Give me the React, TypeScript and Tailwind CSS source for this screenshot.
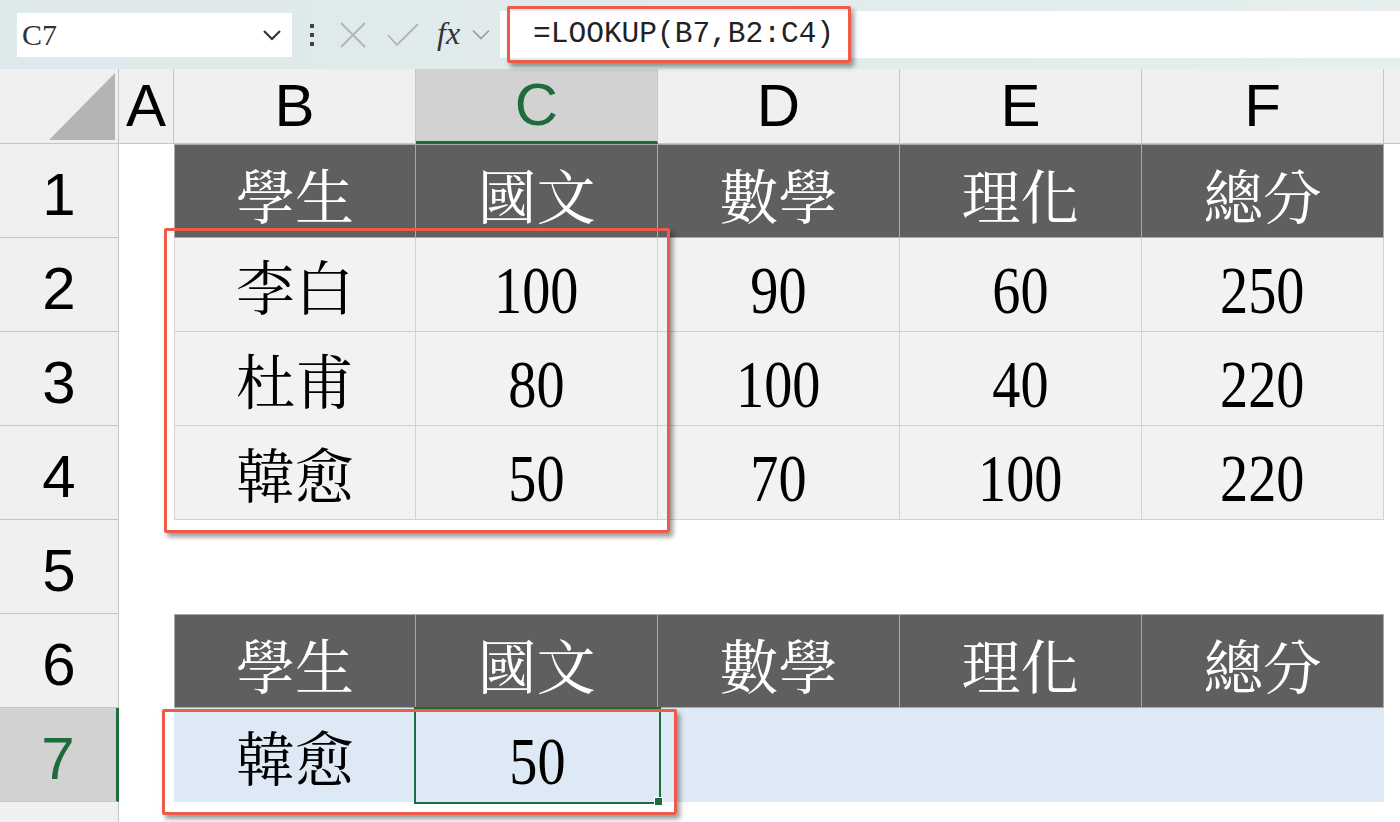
const serif = "font-['Liberation_Serif','Noto_Serif_CJK_TC','Noto_Sans_CJK_TC',serif]";
const sans = "font-['Liberation_Sans','Noto_Sans',sans-serif]";

const cols = ['A', 'B', 'C', 'D', 'E', 'F'];
const heads = ['學生', '國文', '數學', '理化', '總分'];
const rows: (string | number)[][] = [
  ['李白', 100, 90, 60, 250],
  ['杜甫', 80, 100, 40, 220],
  ['韓愈', 50, 70, 100, 220],
];

function CellText({ value }: { value: string | number }) {
  if (typeof value === 'number') {
    return <span className="inline-block scale-x-[0.84] text-[67px] leading-none">{value}</span>;
  }
  return <span className="text-[59px] leading-none">{value}</span>;
}

function HeadRow() {
  return (
    <>
      <div className="bg-white" />
      {heads.map((h, i) => (
        <div
          key={h}
          className={`flex items-center justify-center border-t border-r border-b border-[#a9a9a9] bg-[#5f5f5f] pt-4 text-white ${serif} ${i === 0 ? 'border-l' : ''}`}
        >
          <span className="text-[59px] leading-none">{h}</span>
        </div>
      ))}
      <div className="bg-white" />
    </>
  );
}

function DataRow({ data, blue }: { data: (string | number | null)[]; blue?: boolean }) {
  return (
    <>
      <div className="bg-white" />
      {data.map((v, i) => (
        <div
          key={i}
          className={`flex items-center justify-center pt-3 text-black ${serif} ${
            blue ? 'bg-[#dde9f5]' : `border-r border-b border-[#d3d3d3] bg-[#f2f2f2] ${i === 0 ? 'border-l' : ''}`
          }`}
        >
          {v !== null && <CellText value={v} />}
        </div>
      ))}
      <div className="bg-white" />
    </>
  );
}

function EmptyRow() {
  return (
    <>
      {Array.from({ length: 7 }).map((_, i) => (
        <div key={i} className="bg-white" />
      ))}
    </>
  );
}

function RowHead({ n, active }: { n: number | string; active?: boolean }) {
  return (
    <div
      className={`flex items-center justify-center border-b border-r pt-2 ${sans} text-[60px] leading-none ${
        active
          ? 'border-b-[#c6c6c6] border-r-[3px] border-r-[#1e6b3c] bg-[#d2d2d2] text-[#1e6b3c]'
          : 'border-[#c6c6c6] bg-[#f0f0f0] text-black'
      }`}
    >
      {n}
    </div>
  );
}

function RedBox({ className }: { className: string }) {
  return (
    <div
      className={`pointer-events-none absolute rounded-[2px] border-[3px] border-[#ef5b4b] shadow-[3px_4px_5px_rgba(0,0,0,0.4)] ${className}`}
    />
  );
}

function FormulaBar() {
  return (
    <div className="flex h-[69px] items-center bg-gradient-to-r from-[#dde9ea] to-[#e6eeee]">
      <div className="ml-[17px] flex h-[44px] w-[275px] items-center justify-between bg-white pl-[5px] pr-[10px]">
        <span className={`text-[30px] text-[#333] ${serif}`}>C7</span>
        <svg width="20" height="12" viewBox="0 0 20 12" fill="none" stroke="#333" strokeWidth="2.2">
          <path d="M2 2l8 8 8-8" />
        </svg>
      </div>
      <div className="ml-[18px] flex flex-col gap-[5px]">
        <span className="h-[4px] w-[4px] bg-[#444]" />
        <span className="h-[4px] w-[4px] bg-[#444]" />
        <span className="h-[4px] w-[4px] bg-[#444]" />
      </div>
      <svg className="ml-[26px]" width="26" height="26" viewBox="0 0 26 26" fill="none" stroke="#b3b3b3" strokeWidth="1.8">
        <path d="M1 1l24 24M25 1L1 25" />
      </svg>
      <svg className="ml-[21px]" width="32" height="24" viewBox="0 0 32 24" fill="none" stroke="#b3b3b3" strokeWidth="1.8">
        <path d="M1 12l9 10L31 1" />
      </svg>
      <span className={`ml-[18px] -mt-[4px] text-[32px] italic text-[#333] ${serif}`}>fx</span>
      <svg className="ml-[12px]" width="18" height="11" viewBox="0 0 18 11" fill="none" stroke="#999" strokeWidth="1.6">
        <path d="M1 1.5l8 8 8-8" />
      </svg>
      <div className="ml-[10px] flex h-[47px] flex-1 items-center bg-white pl-[33px]">
        <span className="font-['Liberation_Mono',monospace] text-[29.5px] text-[#222]">=LOOKUP(B7,B2:C4)</span>
      </div>
    </div>
  );
}

export default function App() {
  return (
    <div className="relative h-[822px] w-[1400px] overflow-hidden bg-white">
      <FormulaBar />
      <div className="grid h-[753px] grid-cols-[119px_55px_242px_242px_242px_242px_242px_1fr] grid-rows-[75px_repeat(7,94px)_1fr]">
        {/* column headers */}
        <div className="flex items-end justify-end border-r border-b border-[#c6c6c6] bg-[#f0f0f0] pb-[3px] pr-[3px]">
          <svg width="66" height="67" viewBox="0 0 66 67">
            <polygon points="66,0 66,67 0,67" fill="#b4b4b4" />
          </svg>
        </div>
        {cols.map((c) => (
          <div
            key={c}
            className={`flex items-center justify-center border-r ${sans} text-[60px] leading-none ${
              c === 'C'
                ? 'border-b-[3px] border-r-[#c6c6c6] border-b-[#1e6b3c] bg-[#d2d2d2] text-[#1e6b3c]'
                : 'border-b border-[#c6c6c6] bg-[#f0f0f0] text-black'
            }`}
          >
            {c}
          </div>
        ))}
        <div className="border-b border-[#c6c6c6] bg-[#f0f0f0]" />

        <RowHead n={1} />
        <HeadRow />
        {rows.map((r, i) => (
          <div key={i} className="contents">
            <RowHead n={i + 2} />
            <DataRow data={r} />
          </div>
        ))}
        <RowHead n={5} />
        <EmptyRow />
        <RowHead n={6} />
        <HeadRow />
        <RowHead n={7} active />
        <DataRow data={['韓愈', 50, null, null, null]} blue />
        <div className="border-r border-[#c6c6c6] bg-[#f0f0f0]" />
        <EmptyRow />
      </div>

      {/* selection on C7 */}
      <div className="pointer-events-none absolute left-[414px] top-[707px] h-[97px] w-[247px] border-2 border-[#1e6b3c]" />
      <div className="pointer-events-none absolute left-[654px] top-[797px] h-[9px] w-[9px] border border-white bg-[#1e6b3c]" />

      <RedBox className="left-[164px] top-[228px] h-[305px] w-[506px]" />
      <RedBox className="left-[162px] top-[709px] h-[106px] w-[515px]" />
      <RedBox className="left-[507px] top-[6px] h-[57px] w-[344px]" />
    </div>
  );
}
